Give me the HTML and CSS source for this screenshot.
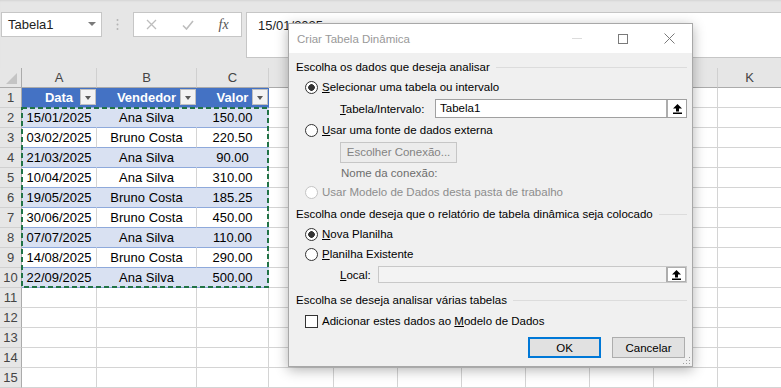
FILE: index.html
```html
<!DOCTYPE html>
<html lang="pt">
<head>
    <meta charset="UTF-8">
    <meta name="viewport" content="width=device-width, initial-scale=1.0">
    <title>Criar Tabela Dinâmica</title>
    <link rel="stylesheet" href="styles.css">
</head>
<body>
    <div class="toolbar">
        <div class="namebox">
            <span>Tabela1</span>
            <svg width="8" height="5" viewBox="0 0 8 5"><path d="M0 0h8L4 4z" fill="#7a7a7a"/></svg>
        </div>
        <svg class="vdots" width="5" height="25" viewBox="0 0 5 25">
            <circle cx="2.5" cy="8" r="1" fill="#b4b4b4"/>
            <circle cx="2.5" cy="12.5" r="1" fill="#b4b4b4"/>
            <circle cx="2.5" cy="17" r="1" fill="#b4b4b4"/>
        </svg>
        <div class="fxbox">
            <svg width="11" height="11" viewBox="0 0 11 11"><path d="M1 1l9 9M10 1l-9 9" stroke="#bdbdbd" stroke-width="1.3" fill="none"/></svg>
            <svg width="12" height="10" viewBox="0 0 12 10"><path d="M1 5.5l3.5 3.5L11 1" stroke="#bdbdbd" stroke-width="1.6" fill="none"/></svg>
            <span class="fx">fx</span>
        </div>
        <div class="formula">15/01/2025</div>
    </div>

    <div class="sheet">
        <span class="corner"><svg width="11" height="11" viewBox="0 0 11 11"><path d="M11 0v11H0z" fill="#c4c4c4"/></svg></span>
        <span class="ch">A</span><span class="ch">B</span><span class="ch">C</span>
        <!-- D..J sit under the dialog -->
        <span class="ch"></span><span class="ch"></span><span class="ch"></span><span class="ch"></span><span class="ch"></span><span class="ch"></span><span class="ch"></span>
        <span class="ch">K</span>

        <span class="rh">1</span>
        <span class="th">Data<i class="dd"></i></span><span class="th">Vendedor<i class="dd"></i></span><span class="th">Valor<i class="dd"></i></span>
        <span></span><span></span><span></span><span></span><span></span><span></span><span></span><span></span>

        <span class="rh">2</span>
        <span class="td band">15/01/2025</span><span class="td band">Ana Silva</span><span class="td band">150.00</span>
        <span></span><span></span><span></span><span></span><span></span><span></span><span></span><span></span>

        <span class="rh">3</span>
        <span class="td">03/02/2025</span><span class="td">Bruno Costa</span><span class="td">220.50</span>
        <span></span><span></span><span></span><span></span><span></span><span></span><span></span><span></span>

        <span class="rh">4</span>
        <span class="td band">21/03/2025</span><span class="td band">Ana Silva</span><span class="td band">90.00</span>
        <span></span><span></span><span></span><span></span><span></span><span></span><span></span><span></span>

        <span class="rh">5</span>
        <span class="td">10/04/2025</span><span class="td">Ana Silva</span><span class="td">310.00</span>
        <span></span><span></span><span></span><span></span><span></span><span></span><span></span><span></span>

        <span class="rh">6</span>
        <span class="td band">19/05/2025</span><span class="td band">Bruno Costa</span><span class="td band">185.25</span>
        <span></span><span></span><span></span><span></span><span></span><span></span><span></span><span></span>

        <span class="rh">7</span>
        <span class="td">30/06/2025</span><span class="td">Bruno Costa</span><span class="td">450.00</span>
        <span></span><span></span><span></span><span></span><span></span><span></span><span></span><span></span>

        <span class="rh">8</span>
        <span class="td band">07/07/2025</span><span class="td band">Ana Silva</span><span class="td band">110.00</span>
        <span></span><span></span><span></span><span></span><span></span><span></span><span></span><span></span>

        <span class="rh">9</span>
        <span class="td">14/08/2025</span><span class="td">Bruno Costa</span><span class="td">290.00</span>
        <span></span><span></span><span></span><span></span><span></span><span></span><span></span><span></span>

        <span class="rh">10</span>
        <span class="td band">22/09/2025</span><span class="td band">Ana Silva</span><span class="td band">500.00</span>
        <span></span><span></span><span></span><span></span><span></span><span></span><span></span><span></span>

        <span class="rh">11</span>
        <span></span><span></span><span></span><span></span><span></span><span></span><span></span><span></span><span></span><span></span><span></span>
        <span class="rh">12</span>
        <span></span><span></span><span></span><span></span><span></span><span></span><span></span><span></span><span></span><span></span><span></span>
        <span class="rh">13</span>
        <span></span><span></span><span></span><span></span><span></span><span></span><span></span><span></span><span></span><span></span><span></span>
        <span class="rh">14</span>
        <span></span><span></span><span></span><span></span><span></span><span></span><span></span><span></span><span></span><span></span><span></span>
        <span class="rh">15</span>
        <span></span><span></span><span></span><span></span><span></span><span></span><span></span><span></span><span></span><span></span><span></span>

        <svg class="marquee" width="248" height="181" viewBox="0 0 248 181">
            <rect x="1" y="1" width="246" height="179" fill="none" stroke="#217346" stroke-width="2" stroke-dasharray="5 3"/>
        </svg>
    </div>

    <div class="dialog">
        <div class="titlebar">
            <span class="title">Criar Tabela Dinâmica</span>
            <div class="winctl">
                <span><svg width="10" height="1" viewBox="0 0 10 1"><path d="M0 .5h10" stroke="#dcdcdc"/></svg></span>
                <span><svg width="10" height="10" viewBox="0 0 10 10"><rect x=".5" y=".5" width="9" height="9" fill="none" stroke="#7a7a7a"/></svg></span>
                <span><svg width="11" height="11" viewBox="0 0 11 11"><path d="M.5 .5l10 10M10.5 .5l-10 10" stroke="#7a7a7a" fill="none"/></svg></span>
            </div>
        </div>
        <div class="dbody">
            <div class="group">Escolha os dados que deseja analisar</div>
            <div class="opt"><span class="radio on"></span><span><u>S</u>elecionar uma tabela ou intervalo</span></div>
            <div class="field">
                <span class="flabel"><u>T</u>abela/Intervalo:</span>
                <div class="input"><span class="val">Tabela1</span><span class="pick"><svg width="11" height="11" viewBox="0 0 11 11"><path d="M5.5 1L10 5.5H7v3H4v-3H1z" fill="#000"/><rect x="1" y="9.5" width="9" height="1.5" fill="#000"/></svg></span></div>
            </div>
            <div class="opt"><span class="radio"></span><span><u>U</u>sar uma fonte de dados externa</span></div>
            <div class="sub"><span class="btn off">Escolher Conexão...</span></div>
            <div class="note">Nome da conexão:</div>
            <div class="opt off small"><span class="radio"></span><span>Usar Modelo de Dados desta pasta de trabalho</span></div>

            <div class="group second">Escolha onde deseja que o relatório de tabela dinâmica seja colocado</div>
            <div class="opt"><span class="radio on"></span><span><u>N</u>ova Planilha</span></div>
            <div class="opt"><span class="radio"></span><span><u>P</u>lanilha Existente</span></div>
            <div class="field local">
                <span class="flabel"><u>L</u>ocal:</span>
                <div class="input off"><span class="val"></span><span class="pick"><svg width="11" height="11" viewBox="0 0 11 11"><path d="M5.5 1L10 5.5H7v3H4v-3H1z" fill="#000"/><rect x="1" y="9.5" width="9" height="1.5" fill="#000"/></svg></span></div>
            </div>

            <div class="group third">Escolha se deseja analisar várias tabelas</div>
            <div class="opt check"><span class="box"></span><span>Adicionar estes dados ao <u>M</u>odelo de Dados</span></div>

            <div class="actions">
                <button class="ok">OK</button>
                <button>Cancelar</button>
            </div>
        </div>
        <svg class="grip" width="9" height="9" viewBox="0 0 9 9">
            <rect x="7" y="1" width="1" height="1" fill="#a0a0a0"/>
            <rect x="4" y="4" width="1" height="1" fill="#a0a0a0"/>
            <rect x="7" y="4" width="1" height="1" fill="#a0a0a0"/>
            <rect x="1" y="7" width="1" height="1" fill="#a0a0a0"/>
            <rect x="4" y="7" width="1" height="1" fill="#a0a0a0"/>
            <rect x="7" y="7" width="1" height="1" fill="#a0a0a0"/>
        </svg>
    </div>
</body>
</html>
```

FILE: styles.css
```css
* {
    box-sizing: border-box;
}
body {
    margin: 0;
    width: 781px;
    height: 388px;
    overflow: hidden;
    position: relative;
    font-family: "Liberation Sans", Arial, sans-serif;
    background-color: #fff;
}

/* formula bar */
.toolbar {
    display: flex;
    align-items: flex-start;
    height: 68px;
    padding: 12px 0 0 1px;
    background-color: #e6e6e6;
    box-shadow: inset 0 2px 2px -1px rgba(0, 0, 0, 0.08);
}
.namebox {
    display: flex;
    align-items: center;
    justify-content: space-between;
    width: 101px;
    height: 25px;
    padding: 0 5px 0 6px;
    background-color: #fff;
    border: 1px solid #c6c6c6;
    font-size: 13px;
    color: #222;
}
.vdots {
    margin: 0 13px;
}
.fxbox {
    display: flex;
    align-items: center;
    justify-content: space-around;
    width: 109px;
    height: 25px;
    background-color: #fff;
    border: 1px solid #c6c6c6;
}
.fx {
    font-family: "Liberation Serif", serif;
    font-style: italic;
    font-size: 14px;
    color: #555;
}
.formula {
    flex: 1;
    height: 46px;
    margin: 0 -3px 0 4px;
    padding: 3px 11px;
    line-height: 19px;
    background-color: #fff;
    border: 1px solid #c6c6c6;
    font-size: 13px;
    color: #222;
}

/* worksheet */
.sheet {
    position: relative;
    display: grid;
    grid-template-columns: 22px 75px 100px 72px 65px repeat(7, 64px);
    grid-auto-rows: 20px;
    font-size: 13px;
    color: #000;
}
.sheet > span {
    border-right: 1px solid #d4d4d4;
    border-bottom: 1px solid #d4d4d4;
    line-height: 19px;
    text-align: center;
    white-space: nowrap;
    overflow: hidden;
}
.sheet > .corner {
    position: relative;
    background-color: #e6e6e6;
    border-right-color: #ababab;
    border-bottom-color: #ababab;
}
.corner svg {
    position: absolute;
    right: 4px;
    bottom: 3px;
}
.sheet > .ch {
    background-color: #e6e6e6;
    color: #444;
    border-bottom-color: #ababab;
    border-right-color: #d0d0d0;
}
.sheet > .rh {
    background-color: #e6e6e6;
    color: #444;
    border-right-color: #ababab;
    border-bottom-color: #d0d0d0;
}
.sheet > .th {
    position: relative;
    background-color: #4472c4;
    color: #fff;
    font-weight: bold;
    border-right-color: #4472c4;
    border-bottom-color: #8ea9db;
}
.sheet > .td {
    border-bottom-color: #8ea9db;
}
.sheet > .td.band {
    background-color: #d9e1f2;
    border-right-color: #d9e1f2;
}
.dd {
    position: absolute;
    right: 0;
    top: 1px;
    width: 16px;
    height: 16px;
    background-color: #f3f3f3;
    border: 1px solid #c0c0c0;
}
.dd::after {
    content: "";
    position: absolute;
    left: 4px;
    top: 6px;
    border-left: 3.5px solid transparent;
    border-right: 3.5px solid transparent;
    border-top: 4px solid #595959;
}
.marquee {
    position: absolute;
    left: 21px;
    top: 39px;
}

/* dialog */
.dialog {
    position: absolute;
    left: 288px;
    top: 23px;
    width: 405px;
    height: 344px;
    background-color: #f0f0f0;
    border: 1px solid #a8a8a8;
    box-shadow: 0 3px 12px rgba(0, 0, 0, 0.3);
    font-size: 11.5px;
    color: #000;
}
.titlebar {
    display: flex;
    align-items: center;
    justify-content: space-between;
    height: 29px;
    padding-left: 8px;
    background-color: #fff;
}
.title {
    color: #999;
    font-size: 11.5px;
}
.winctl {
    display: flex;
    height: 100%;
}
.winctl span {
    display: flex;
    align-items: center;
    justify-content: center;
    width: 46px;
}
.dbody {
    padding: 4px 5px 0 7px;
}
.group {
    display: flex;
    align-items: center;
    height: 20px;
}
.group::after {
    content: "";
    flex: 1;
    height: 1px;
    margin-left: 6px;
    background-color: #dcdcdc;
}
.group.second {
    margin-top: 3px;
}
.group.third {
    margin-top: 5px;
}
.opt {
    display: flex;
    align-items: center;
    height: 20px;
    padding-left: 9px;
}
.opt.small {
    height: 18px;
}
.opt.off {
    color: #8d8d8d;
}
.radio {
    width: 13px;
    height: 13px;
    margin-right: 4px;
    border: 1px solid #333;
    border-radius: 50%;
    background-color: #fff;
}
.radio.on {
    background: radial-gradient(circle, #333 3px, #fff 3.6px);
}
.opt.off .radio {
    border-color: #c4c4c4;
}
.opt.check {
    height: 20px;
    margin-top: 1px;
}
.box {
    width: 13px;
    height: 13px;
    margin-right: 4px;
    border: 1px solid #333;
    background-color: #fff;
}
.field {
    display: flex;
    align-items: center;
    height: 23px;
    padding-left: 44px;
}
.field.local {
    height: 21px;
}
.flabel {
    width: 95px;
}
.field.local .flabel {
    width: 38px;
}
.input {
    flex: 1;
    display: flex;
    align-items: stretch;
    height: 19px;
    background-color: #fff;
    border: 1px solid #a0a0a0;
}
.input.off {
    height: 17px;
    background-color: #f3f3f3;
    border-color: #c8c8c8;
}
.val {
    flex: 1;
    padding-left: 4px;
    line-height: 17px;
}
.pick {
    display: flex;
    align-items: center;
    justify-content: center;
    width: 20px;
    background-color: #fff;
    border-left: 2px solid #adadad;
}
.input.off .pick {
    border: 1px solid #adadad;
    border-left-width: 2px;
}
.sub {
    display: flex;
    align-items: center;
    height: 24px;
    padding-left: 44px;
}
.btn.off {
    width: 117px;
    height: 21px;
    line-height: 19px;
    text-align: center;
    color: #838383;
    background-color: #ececec;
    border: 1px solid #c6c6c6;
}
.note {
    height: 19px;
    line-height: 19px;
    padding-left: 45px;
    color: #6d6d6d;
}
.actions {
    display: flex;
    justify-content: flex-end;
    gap: 11px;
    margin-top: 6px;
    padding-right: 2px;
}
.actions button {
    width: 73px;
    height: 21px;
    padding: 0;
    font-family: inherit;
    font-size: 11.5px;
    color: #000;
    background-color: #e1e1e1;
    border: 1px solid #adadad;
}
.actions button.ok {
    border: 2px solid #0078d7;
}
.grip {
    position: absolute;
    right: 1px;
    bottom: 1px;
}
```
